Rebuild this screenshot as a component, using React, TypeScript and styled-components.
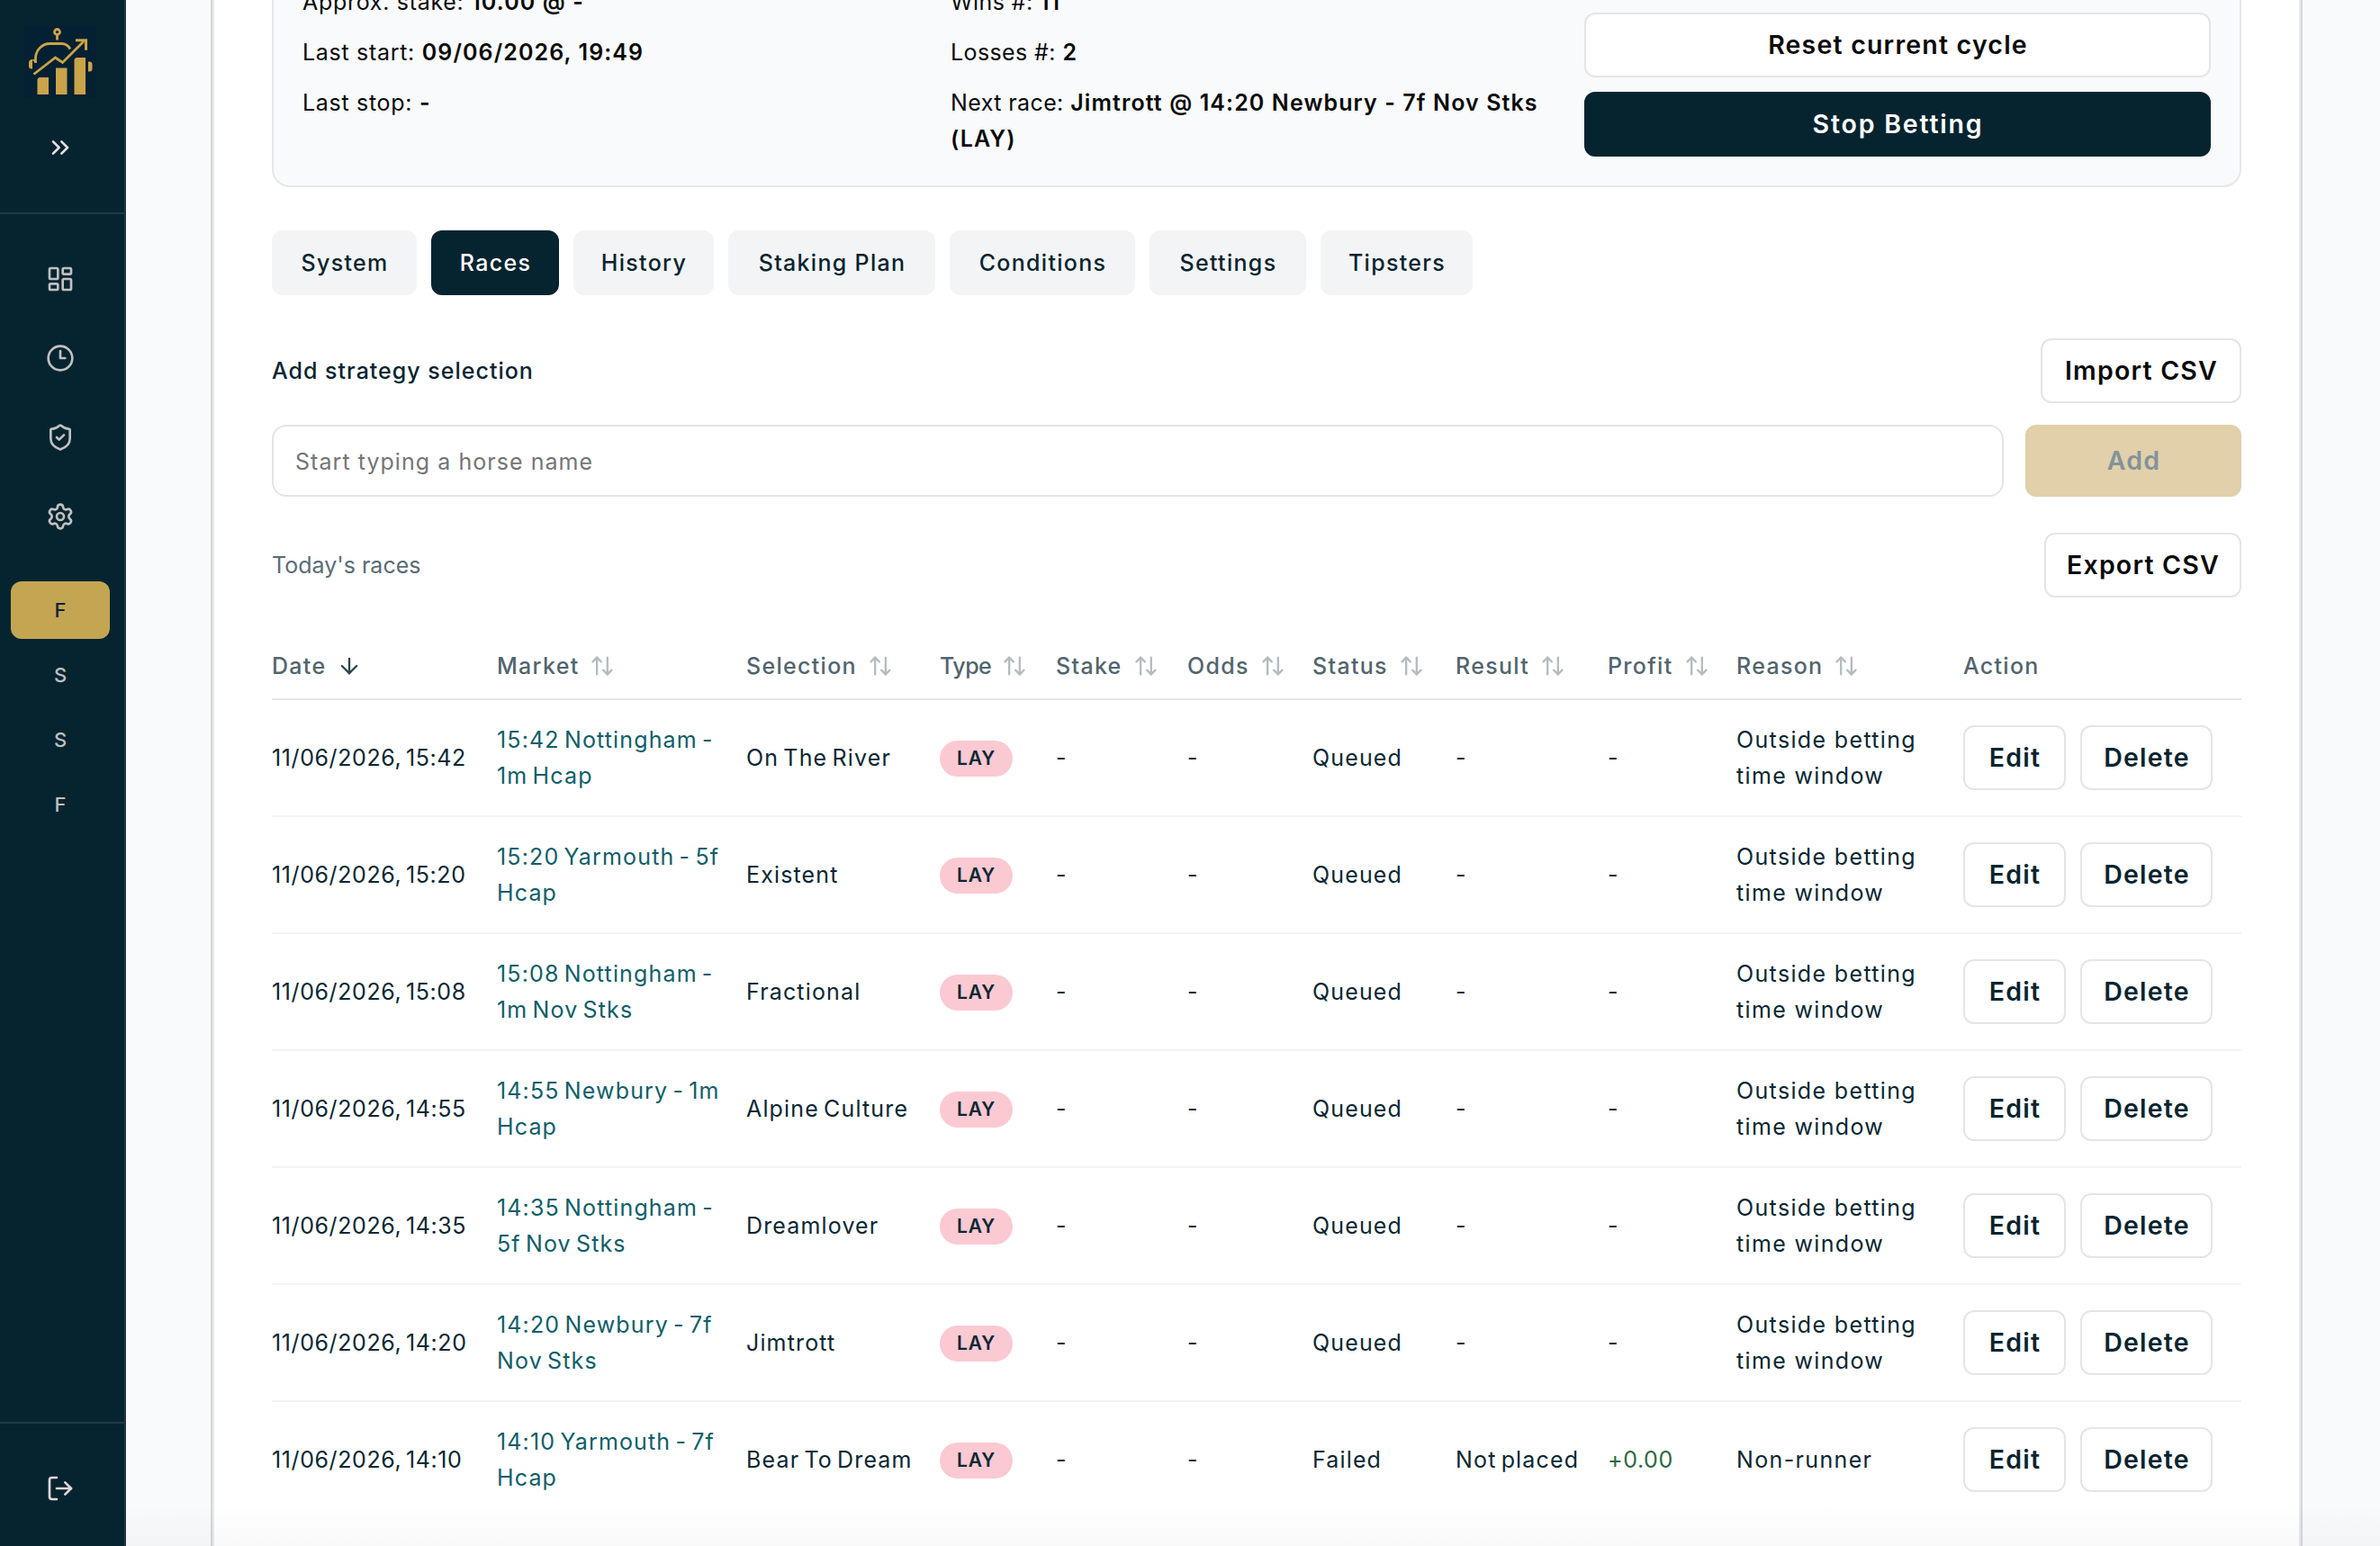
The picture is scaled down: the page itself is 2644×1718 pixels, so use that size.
import { createGlobalStyle, styled } from 'styled-components';
import {
    ArrowDown,
    ArrowUpDown,
    ChevronsRight,
    Clock3,
    LayoutDashboard,
    LogOut,
    Settings,
    ShieldCheck,
} from 'lucide-react';

const GlobalStyle = createGlobalStyle`
    * {
        box-sizing: border-box;
    }

    body {
        margin: 0;
        overflow: hidden;
        background: #f9fafc;
        color: #0a0a0a;
        font-family: Inter, 'Liberation Sans', sans-serif;
        font-size: 25px;
        line-height: 40px;
    }
`;

const Layout = styled.div`
    display: flex;
    width: 100%;
    height: 1718px;
    overflow: hidden;
`;

const Sidebar = styled.aside`
    flex: 0 0 140px;
    display: flex;
    flex-direction: column;
    background: #062430;
    border-right: 2px solid #1f3a45;
    color: #c0c0c0;
`;

const SidebarTop = styled.div`
    height: 238px;
    padding: 28px 4px 0 0;
    display: flex;
    flex-direction: column;
    align-items: center;
    gap: 40px;
    border-bottom: 2px solid #1f3a45;
    color: #e5e0de;
`;

const Nav = styled.nav`
    flex: 1;
    display: flex;
    flex-direction: column;
    gap: 24px;
    padding: 40px 16px 0 12px;
`;

const NavItem = styled.a`
    height: 64px;
    display: flex;
    align-items: center;
    justify-content: center;
`;

const StrategyList = styled.div`
    display: flex;
    flex-direction: column;
    gap: 8px;
    margin-top: 16px;
`;

const StrategyItem = styled(NavItem)<{ $active?: boolean }>`
    border-radius: 12px;
    font-size: 22px;
    font-weight: 500;
    background: ${({ $active }) => ($active ? '#c4a552' : 'transparent')};
    color: ${({ $active }) => ($active ? '#062430' : '#c0c0c0')};
`;

const SidebarBottom = styled.div`
    height: 138px;
    display: flex;
    align-items: center;
    justify-content: center;
    padding: 8px 4px 0 0;
    border-top: 2px solid #1f3a45;
    color: #e0d9d6;
`;

const Main = styled.main`
    flex: 1;
    padding: 0 88px 0 96px;
`;

const Card = styled.section`
    display: flow-root;
    height: 100%;
    padding: 0 64px;
    background: #fff;
    border: solid #e8e9eb;
    border-width: 0 2px;
    box-shadow: 0 0 0 2px #d5d7da;
`;

const Panel = styled.div`
    margin-top: -52px;
    padding: 32px;
    display: grid;
    grid-template-columns: 704px 688px 696px;
    gap: 16px;
    background: #f9fafc;
    border: 2px solid #e5e7eb;
    border-radius: 20px;
`;

const InfoList = styled.div<{ $tracking: number }>`
    display: flex;
    flex-direction: column;
    gap: 16px;
    letter-spacing: ${({ $tracking }) => $tracking}px;
    white-space: nowrap;

    b {
        font-weight: 600;
        letter-spacing: 1.1px;
    }
`;

const PanelActions = styled.div`
    display: flex;
    flex-direction: column;
    gap: 16px;
    padding-top: 32px;
`;

const Button = styled.button<{ $width?: number }>`
    width: ${({ $width }) => ($width ? `${$width}px` : '100%')};
    height: 72px;
    padding: 0 0 2px 1px;
    background: #fff;
    border: 2px solid #e5e5e5;
    border-radius: 12px;
    color: #0a0a0a;
    font-family: inherit;
    font-size: 28.5px;
    font-weight: 600;
    letter-spacing: 1.2px;
    white-space: nowrap;
`;

const PrimaryButton = styled(Button)`
    background: #062430;
    border-color: #062430;
    color: #fff;
    letter-spacing: 1.8px;
`;

const AddButton = styled(Button)`
    height: 80px;
    background: #e1d0aa;
    border-color: #e1d0aa;
    color: #84929a;
`;

const RowButton = styled(Button)`
    color: #062430;
`;

const Tabs = styled.div`
    display: flex;
    gap: 16px;
    margin-top: 48px;
`;

const Tab = styled.button<{ $width: number; $active?: boolean }>`
    width: ${({ $width }) => $width}px;
    height: 72px;
    padding: 0 0 0 1px;
    border: 0;
    border-radius: 12px;
    background: ${({ $active }) => ($active ? '#062430' : '#f3f4f6')};
    color: ${({ $active }) => ($active ? '#fff' : '#062430')};
    font-family: inherit;
    font-size: 25px;
    font-weight: 500;
    letter-spacing: 1.3px;
    white-space: nowrap;
`;

const SectionHead = styled.div<{ $top: number }>`
    display: flex;
    align-items: center;
    justify-content: space-between;
    margin-top: ${({ $top }) => $top}px;
`;

const SectionTitle = styled.h3`
    margin: 0;
    color: #062430;
    font-size: 25px;
    font-weight: 500;
    letter-spacing: 1px;
`;

const SectionNote = styled.span`
    color: #596c75;
`;

const AddRow = styled.div`
    display: flex;
    gap: 24px;
    margin-top: 24px;
`;

const HorseInput = styled.input`
    flex: 1;
    height: 80px;
    padding: 1px 24px 0;
    border: 2px solid #e5e5e5;
    border-radius: 16px;
    font-family: inherit;
    font-size: 25px;
    letter-spacing: 1.05px;

    &::placeholder {
        color: #757575;
        opacity: 1;
    }
`;

const Table = styled.table`
    width: 100%;
    margin-top: 38px;
    table-layout: fixed;
    border-collapse: separate;
    border-spacing: 0;
    color: #0a2733;
`;

const Th = styled.th<{ $tight?: boolean }>`
    height: 76px;
    padding: 1px 0 0;
    border-bottom: 2px solid #e5e7eb;
    color: #52656e;
    font-weight: 500;
    letter-spacing: ${({ $tight }) => ($tight ? -0.5 : 1.3)}px;
    text-align: left;
`;

const HeadLabel = styled.div`
    display: flex;
    align-items: center;
    gap: 12px;
`;

const Td = styled.td`
    height: 130px;
    padding: 0;
    border-bottom: 2px solid #f3f4f6;
    letter-spacing: 1.15px;
    word-spacing: -3px;
    white-space: nowrap;

    tr:last-child & {
        border-bottom-color: transparent;
    }
`;

const DateCell = styled(Td)`
    letter-spacing: 0.6px;
`;

const ReasonCell = styled(Td)`
    letter-spacing: 1.35px;
    word-spacing: 0;
`;

const MarketLink = styled.a`
    color: #0f5e69;
`;

const Badge = styled.span`
    display: block;
    width: 81px;
    height: 40px;
    margin-top: 2px;
    border-radius: 20px;
    background: #fbc9d2;
    font-size: 21px;
    font-weight: 600;
    letter-spacing: 0.8px;
    text-align: center;
`;

const Profit = styled.span<{ $positive: boolean }>`
    color: ${({ $positive }) => ($positive ? '#2c6a3f' : 'inherit')};
    letter-spacing: 0.6px;
`;

const RowActions = styled.div`
    display: flex;
    gap: 16px;
`;

// soft fade over the bottom edge of the page
const BottomFade = styled.div`
    position: absolute;
    left: 140px;
    right: 0;
    top: 1670px;
    height: 48px;
    background: linear-gradient(rgba(0, 0, 0, 0), rgba(0, 0, 0, 0.022));
`;

const tabs = [
    { label: 'System', width: 161 },
    { label: 'Races', width: 142 },
    { label: 'History', width: 156 },
    { label: 'Staking Plan', width: 230 },
    { label: 'Conditions', width: 206 },
    { label: 'Settings', width: 174 },
    { label: 'Tipsters', width: 169 },
];

const columns = [
    { label: 'Date', width: 250 },
    { label: 'Market', width: 277 },
    { label: 'Selection', width: 215 },
    { label: 'Type', width: 129 },
    { label: 'Stake', width: 146 },
    { label: 'Odds', width: 139 },
    { label: 'Status', width: 159 },
    { label: 'Result', width: 169 },
    { label: 'Profit', width: 143 },
    { label: 'Reason', width: 252 },
    { label: 'Action', width: 309 },
];

type Race = {
    time: string;
    market: [string, string];
    selection: string;
    status?: string;
    result?: string;
    profit?: string;
    reason?: string[];
};

const races: Race[] = [
    {
        time: '15:42',
        market: ['15:42 Nottingham -', '1m Hcap'],
        selection: 'On The River',
    },
    {
        time: '15:20',
        market: ['15:20 Yarmouth - 5f', 'Hcap'],
        selection: 'Existent',
    },
    {
        time: '15:08',
        market: ['15:08 Nottingham -', '1m Nov Stks'],
        selection: 'Fractional',
    },
    {
        time: '14:55',
        market: ['14:55 Newbury - 1m', 'Hcap'],
        selection: 'Alpine Culture',
    },
    {
        time: '14:35',
        market: ['14:35 Nottingham -', '5f Nov Stks'],
        selection: 'Dreamlover',
    },
    {
        time: '14:20',
        market: ['14:20 Newbury - 7f', 'Nov Stks'],
        selection: 'Jimtrott',
    },
    {
        time: '14:10',
        market: ['14:10 Yarmouth - 7f', 'Hcap'],
        selection: 'Bear To Dream',
        status: 'Failed',
        result: 'Not placed',
        profit: '+0.00',
        reason: ['Non-runner'],
    },
];

const Lines = ({ lines }: { lines: string[] }) => (
    <>
        {lines.map((line) => (
            <div key={line}>{line}</div>
        ))}
    </>
);

const Logo = () => (
    <svg width="80" height="80" viewBox="0 0 80 80" fill="none">
        <rect width="80" height="80" fill="#042033" />
        <g stroke="#c9a449" strokeWidth="2.8">
            <circle cx="36.5" cy="7.5" r="3" />
            <path d="M36.5 11v5.5" />
            <path d="M12.5 42v-5c0-9 7-16.500 16-16.500h13c4 0 7.500 2.500 9.500 6" />
            <path d="M10.500 54.500 34.500 36l8 5.500L66 18" />
            <path d="M57 16.700h11.500v11" strokeWidth="3" />
        </g>
        <g fill="#c9a449">
            <path d="M9 38.500v10H8a3 3 0 0 1-3-3V42a4 4 0 0 1 4-4h4v3h-2z" />
            <path d="M71 40.500h1.500a3 3 0 0 1 3 3v5a3 3 0 0 1-3 3H71z" />
            <path d="M14.500 60l2-2H27v19H14.500z" />
            <path d="M35 47.500h12.500V77H35z" />
            <path d="M55.500 38l2-2H68v41H55.500z" />
        </g>
    </svg>
);

const App = () => {
    return (
        <>
            <GlobalStyle />
            <Layout>
                <Sidebar>
                    <SidebarTop>
                        <Logo />
                        <ChevronsRight size={32} />
                    </SidebarTop>
                    <Nav>
                        <NavItem>
                            <LayoutDashboard size={32} />
                        </NavItem>
                        <NavItem>
                            <Clock3 size={32} />
                        </NavItem>
                        <NavItem>
                            <ShieldCheck size={32} />
                        </NavItem>
                        <NavItem>
                            <Settings size={32} />
                        </NavItem>
                        <StrategyList>
                            <StrategyItem $active>F</StrategyItem>
                            <StrategyItem>S</StrategyItem>
                            <StrategyItem>S</StrategyItem>
                            <StrategyItem>F</StrategyItem>
                        </StrategyList>
                    </Nav>
                    <SidebarBottom>
                        <LogOut size={32} />
                    </SidebarBottom>
                </Sidebar>
                <Main>
                    <Card>
                        <Panel>
                            <InfoList $tracking={0.7}>
                                <div>
                                    Approx. stake: <b>10.00 @ -</b>
                                </div>
                                <div>
                                    Last start: <b>09/06/2026, 19:49</b>
                                </div>
                                <div>
                                    Last stop: <b>-</b>
                                </div>
                            </InfoList>
                            <InfoList $tracking={0.4}>
                                <div>
                                    Wins #: <b>11</b>
                                </div>
                                <div>
                                    Losses #: <b>2</b>
                                </div>
                                <div>
                                    Next race:{' '}
                                    <b>
                                        Jimtrott @ 14:20 Newbury - 7f Nov Stks
                                        <br />
                                        (LAY)
                                    </b>
                                </div>
                            </InfoList>
                            <PanelActions>
                                <Button>Reset current cycle</Button>
                                <PrimaryButton>Stop Betting</PrimaryButton>
                            </PanelActions>
                        </Panel>

                        <Tabs>
                            {tabs.map(({ label, width }) => (
                                <Tab
                                    key={label}
                                    $width={width}
                                    $active={label === 'Races'}
                                >
                                    {label}
                                </Tab>
                            ))}
                        </Tabs>

                        <SectionHead $top={48}>
                            <SectionTitle>Add strategy selection</SectionTitle>
                            <Button $width={223}>Import CSV</Button>
                        </SectionHead>
                        <AddRow>
                            <HorseInput placeholder="Start typing a horse name" />
                            <AddButton $width={240}>Add</AddButton>
                        </AddRow>

                        <SectionHead $top={40}>
                            <SectionNote>Today's races</SectionNote>
                            <Button $width={219}>Export CSV</Button>
                        </SectionHead>

                        <Table>
                            <colgroup>
                                {columns.map(({ label, width }) => (
                                    <col key={label} width={width} />
                                ))}
                            </colgroup>
                            <thead>
                                <tr>
                                    {columns.map(({ label }) => (
                                        <Th
                                            key={label}
                                            $tight={label === 'Type'}
                                        >
                                            <HeadLabel>
                                                {label}
                                                {label === 'Date' && (
                                                    <ArrowDown
                                                        size={28}
                                                        color="#2b4651"
                                                    />
                                                )}
                                                {label !== 'Date' &&
                                                    label !== 'Action' && (
                                                        <ArrowUpDown
                                                            size={28}
                                                            color="#b4bcc0"
                                                        />
                                                    )}
                                            </HeadLabel>
                                        </Th>
                                    ))}
                                </tr>
                            </thead>
                            <tbody>
                                {races.map((race) => (
                                    <tr key={race.time}>
                                        <DateCell>
                                            11/06/2026, {race.time}
                                        </DateCell>
                                        <Td>
                                            <MarketLink>
                                                <Lines lines={race.market} />
                                            </MarketLink>
                                        </Td>
                                        <Td>{race.selection}</Td>
                                        <Td>
                                            <Badge>LAY</Badge>
                                        </Td>
                                        <Td>-</Td>
                                        <Td>-</Td>
                                        <Td>{race.status ?? 'Queued'}</Td>
                                        <Td>{race.result ?? '-'}</Td>
                                        <Td>
                                            <Profit $positive={!!race.profit}>
                                                {race.profit ?? '-'}
                                            </Profit>
                                        </Td>
                                        <ReasonCell>
                                            <Lines
                                                lines={
                                                    race.reason ?? [
                                                        'Outside betting',
                                                        'time window',
                                                    ]
                                                }
                                            />
                                        </ReasonCell>
                                        <Td>
                                            <RowActions>
                                                <RowButton $width={114}>
                                                    Edit
                                                </RowButton>
                                                <RowButton $width={147}>
                                                    Delete
                                                </RowButton>
                                            </RowActions>
                                        </Td>
                                    </tr>
                                ))}
                            </tbody>
                        </Table>
                    </Card>
                </Main>
            </Layout>
            <BottomFade />
        </>
    );
};

export default App;
